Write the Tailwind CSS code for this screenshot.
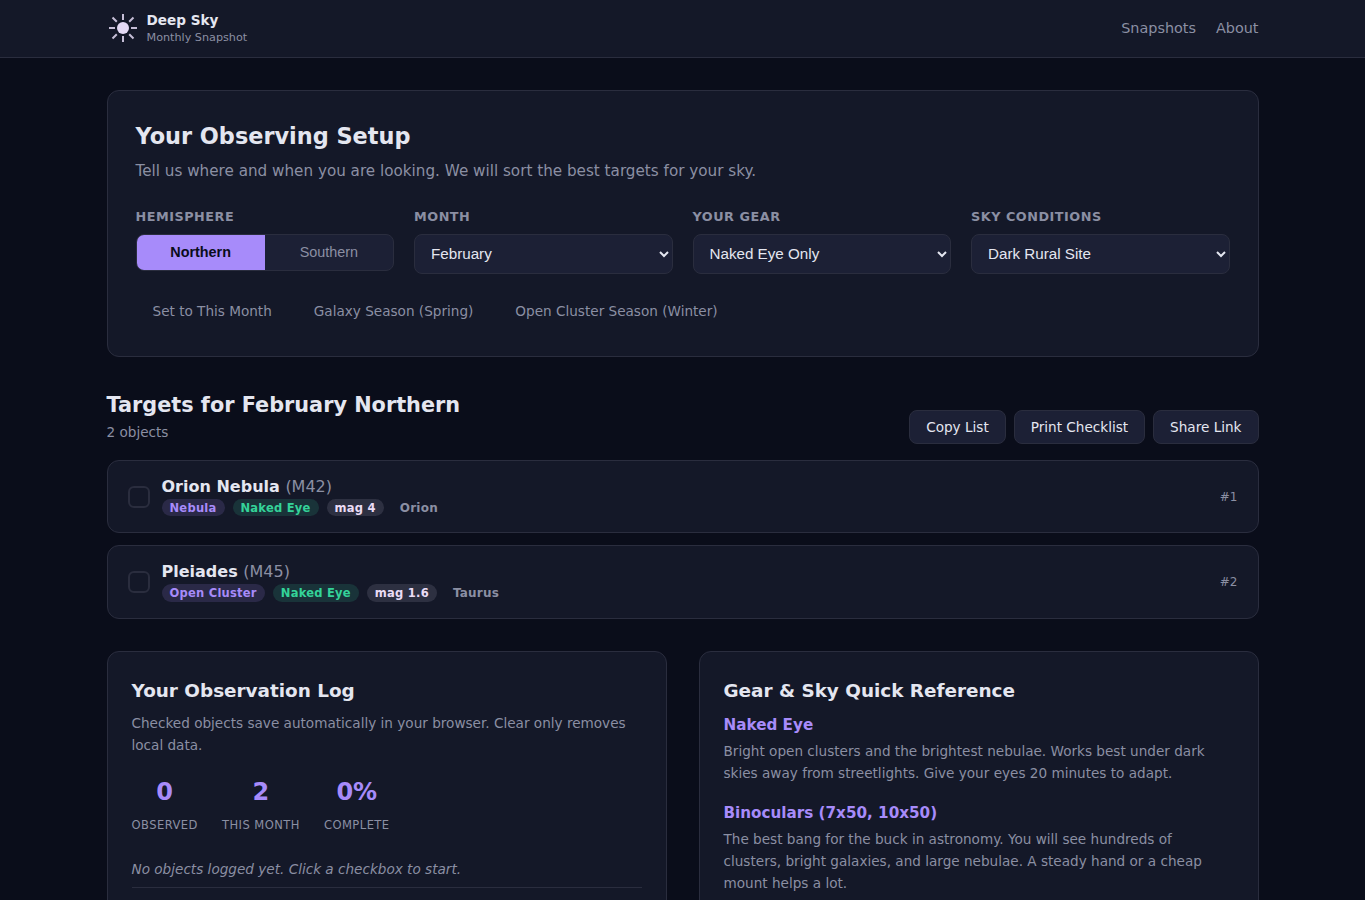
<!DOCTYPE html>
<html lang="en">

<head>
  <meta charset="UTF-8" />
  <meta name="viewport" content="width=device-width, initial-scale=1.0" />
  <title>Deep Sky Monthly Snapshot</title>
  <script src="https://cdn.jsdelivr.net/npm/@tailwindcss/browser@4"></script>
</head>

<body class="h-screen overflow-hidden bg-[#0a0d1a] font-['DejaVu_Sans',sans-serif] leading-[1.6] text-[#e4e6f0]">
  <header class="h-[58px] border-b border-[#2a2d3e] bg-[#141828]">
    <div class="mx-auto flex h-full max-w-[1200px] items-center justify-between px-6">
      <!-- Logo -->
      <a href="#" class="flex items-center gap-2">
        <svg class="mb-px h-8 w-8" viewBox="0 0 32 32" fill="none" stroke="#e4daf5" stroke-width="2">
          <circle cx="16" cy="16" r="6" fill="#e4daf5" stroke="none" />
          <path stroke-opacity="0.85" d="M16 2v6M16 24v6M2 16h6M24 16h6M5.5 5.5l4.3 4.3M22.2 22.2l4.3 4.3M26.5 5.5l-4.3 4.3M9.8 22.2l-4.3 4.3" />
        </svg>
        <span class="flex flex-col">
          <span class="text-[13.6px] font-bold leading-[17px]">Deep Sky</span>
          <span class="text-[11.2px] leading-[17px] text-[#8b8fa3]">Monthly Snapshot</span>
        </span>
      </a>
      <nav class="flex gap-5 text-[14.4px] text-[#8b8fa3]">
        <a href="#" class="hover:text-white">Snapshots</a>
        <a href="#" class="hover:text-white">About</a>
      </nav>
    </div>
  </header>

  <main class="mx-auto max-w-[1200px] px-6 pt-8">
    <!-- Setup -->
    <section class="rounded-xl border border-[#2a2d3e] bg-[#141828] p-7">
      <h2 class="mb-1 text-[22.4px] font-bold">Your Observing Setup</h2>
      <p class="mb-6 text-[15.2px] text-[#8b8fa3]">Tell us where and when you are looking. We will sort the best targets for your sky.</p>
      <div class="grid grid-cols-4 items-start gap-5">
        <div>
          <div class="mb-[6.4px] text-[12.8px] font-semibold uppercase tracking-[0.04em] text-[#8b8fa3]">Hemisphere</div>
          <div class="flex overflow-hidden rounded-lg border border-[#2a2d3e] bg-[#1c2035] font-['Liberation_Sans',sans-serif] text-[14.4px]">
            <button class="flex-1 bg-[#a78bfa] pt-[9px] pb-[10px] font-semibold leading-4 text-[#0a0d1a]">Northern</button>
            <button class="flex-1 pt-[9px] pb-[10px] leading-4 text-[#8b8fa3]">Southern</button>
          </div>
        </div>
        <div>
          <label for="month" class="mb-[6.4px] block text-[12.8px] font-semibold uppercase tracking-[0.04em] text-[#8b8fa3]">Month</label>
          <select id="month" class="block h-10 w-full rounded-lg border border-[#2a2d3e] bg-[#1c2035] px-3 pb-px font-['Liberation_Sans',sans-serif] text-[15.2px] text-[#e4e6f0]">
            <option>February</option>
          </select>
        </div>
        <div>
          <label for="gear" class="mb-[6.4px] block text-[12.8px] font-semibold uppercase tracking-[0.04em] text-[#8b8fa3]">Your Gear</label>
          <select id="gear" class="block h-10 w-full rounded-lg border border-[#2a2d3e] bg-[#1c2035] px-3 pb-px font-['Liberation_Sans',sans-serif] text-[15.2px] text-[#e4e6f0]">
            <option>Naked Eye Only</option>
          </select>
        </div>
        <div>
          <label for="sky" class="mb-[6.4px] block text-[12.8px] font-semibold uppercase tracking-[0.04em] text-[#8b8fa3]">Sky Conditions</label>
          <select id="sky" class="block h-10 w-full rounded-lg border border-[#2a2d3e] bg-[#1c2035] px-3 pb-px font-['Liberation_Sans',sans-serif] text-[15.2px] text-[#e4e6f0]">
            <option>Dark Rural Site</option>
          </select>
        </div>
      </div>
      <div class="mt-5 flex gap-2 text-[13.6px] text-[#8b8fa3]">
        <button class="h-[34px] rounded-lg border border-transparent px-4 pt-px">Set to This Month</button>
        <button class="h-[34px] rounded-lg border border-transparent px-4 pt-px">Galaxy Season (Spring)</button>
        <button class="h-[34px] rounded-lg border border-transparent px-4 pt-px">Open Cluster Season (Winter)</button>
      </div>
    </section>

    <!-- Targets -->
    <section class="mt-8">
      <div class="mb-4 flex items-end justify-between">
        <div>
          <h2 class="text-[20.8px] font-bold">Targets for February Northern</h2>
          <p class="text-[13.6px] text-[#8b8fa3]">2 objects</p>
        </div>
        <div class="flex gap-2 text-[13.6px]">
          <button class="h-[34px] rounded-lg border border-[#2a2d3e] bg-[#1c2035] px-4 pt-px">Copy List</button>
          <button class="h-[34px] rounded-lg border border-[#2a2d3e] bg-[#1c2035] px-4 pt-px">Print Checklist</button>
          <button class="h-[34px] rounded-lg border border-[#2a2d3e] bg-[#1c2035] px-4 pt-px">Share Link</button>
        </div>
      </div>
      <div class="flex flex-col gap-3">
        <div class="flex items-center gap-3 rounded-xl border border-[#2a2d3e] bg-[#141828] px-5 py-4">
          <button aria-label="Mark observed" class="h-[22px] w-[22px] rounded-md border-2 border-[#2a2d3e]"></button>
          <div class="flex-1">
            <div class="mb-[1.7px] text-base font-semibold leading-[20.3px]">Orion Nebula <span class="font-normal text-[#8b8fa3]">(M42)</span></div>
            <div class="flex gap-2 text-[11.52px] font-semibold leading-[16.3px] tracking-[0.02em]">
              <span class="rounded-full bg-[#a78bfa]/15 px-2 pt-px text-[#a78bfa]">Nebula</span>
              <span class="rounded-full bg-[#34d399]/15 px-2 pt-px text-[#34d399]">Naked Eye</span>
              <span class="rounded-full bg-[#eadcf5]/12 px-2 pt-px text-[#eadcf5]">mag 4</span>
              <span class="px-2 pt-px text-[12px] text-[#8b8fa3]">Orion</span>
            </div>
          </div>
          <span class="text-xs text-[#8b8fa3]">#1</span>
        </div>
        <div class="flex items-center gap-3 rounded-xl border border-[#2a2d3e] bg-[#141828] px-5 py-4">
          <button aria-label="Mark observed" class="h-[22px] w-[22px] rounded-md border-2 border-[#2a2d3e]"></button>
          <div class="flex-1">
            <div class="mb-[1.7px] text-base font-semibold leading-[20.3px]">Pleiades <span class="font-normal text-[#8b8fa3]">(M45)</span></div>
            <div class="flex gap-2 text-[11.52px] font-semibold leading-[16.3px] tracking-[0.02em]">
              <span class="rounded-full bg-[#a78bfa]/15 px-2 pt-px text-[#a78bfa]">Open Cluster</span>
              <span class="rounded-full bg-[#34d399]/15 px-2 pt-px text-[#34d399]">Naked Eye</span>
              <span class="rounded-full bg-[#eadcf5]/12 px-2 pt-px text-[#eadcf5]">mag 1.6</span>
              <span class="px-2 pt-px text-[12px] text-[#8b8fa3]">Taurus</span>
            </div>
          </div>
          <span class="text-xs text-[#8b8fa3]">#2</span>
        </div>
      </div>
    </section>

    <div class="mt-8 grid grid-cols-2 gap-8">
      <!-- Observation log -->
      <section class="rounded-xl border border-[#2a2d3e] bg-[#141828] p-6">
        <h3 class="mb-2 text-[18.4px] font-bold">Your Observation Log</h3>
        <p class="text-[13.6px] text-[#8b8fa3]">Checked objects save automatically in your browser. Clear only removes local data.</p>
        <div class="mt-[16.5px] flex gap-6 text-center">
          <div>
            <div class="text-2xl font-bold leading-[38.4px] text-[#a78bfa]">0</div>
            <div class="mt-[5px] text-[11.52px] uppercase leading-[19px] tracking-[0.04em] text-[#8b8fa3]">Observed</div>
          </div>
          <div>
            <div class="text-2xl font-bold leading-[38.4px] text-[#a78bfa]">2</div>
            <div class="mt-[5px] text-[11.52px] uppercase leading-[19px] tracking-[0.04em] text-[#8b8fa3]">This Month</div>
          </div>
          <div>
            <div class="text-2xl font-bold leading-[38.4px] text-[#a78bfa]">0%</div>
            <div class="mt-[5px] text-[11.52px] uppercase leading-[19px] tracking-[0.04em] text-[#8b8fa3]">Complete</div>
          </div>
        </div>
        <ul class="mt-[17px] h-[120px]">
          <li class="border-b border-[#2a2d3e] py-[6.4px] text-[13.6px] italic text-[#8b8fa3]">No objects logged yet. Click a checkbox to start.</li>
        </ul>
      </section>

      <!-- Quick reference -->
      <section class="rounded-xl border border-[#2a2d3e] bg-[#141828] p-6">
        <h3 class="mb-2 text-[18.4px] font-bold">Gear &amp; Sky Quick Reference</h3>
        <h4 class="mb-1 text-[15.2px] font-semibold text-[#a78bfa]">Naked Eye</h4>
        <p class="mb-4 text-[13.6px] text-[#8b8fa3]">Bright open clusters and the brightest nebulae. Works best under dark skies away from streetlights. Give your eyes 20 minutes to adapt.</p>
        <h4 class="mb-1 text-[15.2px] font-semibold text-[#a78bfa]">Binoculars (7x50, 10x50)</h4>
        <p class="mb-4 text-[13.6px] text-[#8b8fa3]">The best bang for the buck in astronomy. You will see hundreds of clusters, bright galaxies, and large nebulae. A steady hand or a cheap mount helps a lot.</p>
      </section>
    </div>
  </main>
</body>

</html>
